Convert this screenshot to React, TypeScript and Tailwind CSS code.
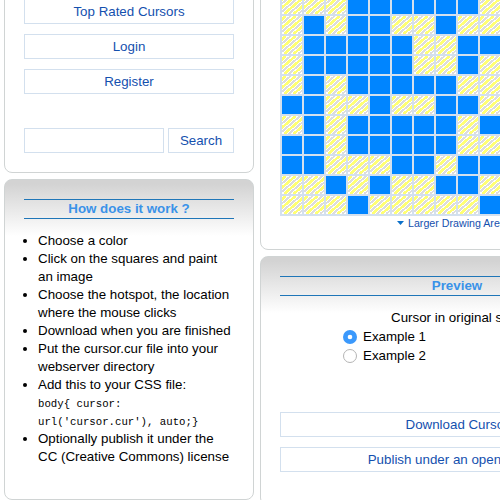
import React from "react";

const rows = [
  "YYYBBBBBBY",
  "YBYBBYYBYY",
  "YBBBBBYYBB",
  "YBBBBBYYBY",
  "YBYBBBBBYY",
  "BBYYBYYBBY",
  "YBYBBBBBYB",
  "BBYBBBBBYY",
  "BBYYYBBYBB",
  "YYBYBYYBBY",
  "YYYBYYYYYB",
];

function LinkBox({ children, className = "" }: { children: React.ReactNode; className?: string }) {
  return (
    <a className={`flex h-[25px] shrink-0 items-center justify-center border border-[#d3e0ee] bg-white pt-px whitespace-nowrap text-[#1450ae] ${className}`}>
      {children}
    </a>
  );
}

function Heading({ children }: { children: React.ReactNode }) {
  return (
    <h2 className="h-5 shrink-0 border-y border-[#1f76b8] text-center text-[13.33px] leading-[17px] font-bold text-[#3a92e8]">
      {children}
    </h2>
  );
}

function EmptyCell() {
  return (
    <svg className="h-[18px] w-5 bg-white" viewBox="0 0 20 18" shapeRendering="crispEdges">
      {[0, 1, 2, 3, 4].map((k) => (
        <React.Fragment key={k}>
          <path d={`M${4 + k * 9.5} 0L${4 + k * 9.5 - 21} 18`} stroke="#ffff75" strokeWidth="2.6" />
          <path d={`M${8.7 + k * 9.5} 0L${8.7 + k * 9.5 - 21} 18`} stroke="#dcdcdc" strokeWidth="2" />
        </React.Fragment>
      ))}
    </svg>
  );
}

const card = "flex flex-col rounded-[8px] border border-[#d0d4d4] px-[19px]";
const shaded = "bg-[linear-gradient(#d3d3d3_4px,#fff_56px)]";

export default function App() {
  return (
    <div className="flex h-[500px] w-[500px] overflow-hidden bg-white font-['Liberation_Sans',Arial,sans-serif] text-[13.33px] leading-[18px] text-black">
      <aside className="ml-1 flex w-[250px] shrink-0 flex-col gap-[6px]">
        <section className={`${card} -mt-10 h-[213px] shrink-0 justify-end pb-[19px]`}>
          <nav className="flex flex-col gap-[10px]">
            <LinkBox>Top Rated Cursors</LinkBox>
            <LinkBox>Login</LinkBox>
            <LinkBox>Register</LinkBox>
          </nav>
          <form className="mt-[34px] flex justify-between">
            <input className="h-[25px] w-[140px] border border-[#d3e0ee] outline-none" />
            <LinkBox className="w-[66px]">Search</LinkBox>
          </form>
        </section>

        <section className={`${card} ${shaded} h-[321px] shrink-0 pt-[19px]`}>
          <Heading>How does it work ?</Heading>
          <ul className="mt-[13px] list-disc pl-[14px] whitespace-nowrap">
            <li>Choose a color</li>
            <li>Click on the squares and paint<br />an image</li>
            <li>Choose the hotspot, the location<br />where the mouse clicks</li>
            <li>Download when you are finished</li>
            <li>Put the cursor.cur file into your<br />webserver directory</li>
            <li>
              Add this to your CSS file:
              <code className="block h-9 pt-px font-['Liberation_Mono',monospace] text-[10.7px]">
                body&#123; cursor:<br />url('cursor.cur'), auto;&#125;
              </code>
            </li>
            <li>Optionally publish it under the<br />CC (Creative Commons) license</li>
          </ul>
        </section>
      </aside>

      <main className="ml-[6px] flex w-[394px] shrink-0 flex-col gap-[6px]">
        <section className={`${card} -mt-10 h-[290px] shrink-0`}>
          <div className="mt-[33px] grid w-fit shrink-0 grid-cols-[repeat(10,20px)] gap-[2px] bg-[#d3e0ee] p-[2px]">
            {rows.flatMap((row, r) =>
              row.split("").map((c, i) =>
                c === "B" ? <div key={`${r}-${i}`} className="h-[18px] bg-[#0085ff]" /> : <EmptyCell key={`${r}-${i}`} />
              )
            )}
          </div>
          <a className="ml-[117px] flex h-[14px] items-center gap-[4px] text-[10.67px] whitespace-nowrap text-[#1450ae]">
            <svg className="h-1 w-[7px]" viewBox="0 0 7 4"><path d="M0 0h7L3.5 4z" fill="#0b70c9" /></svg>
            Larger Drawing Area
          </a>
        </section>

        <section className={`${card} ${shaded} h-[250px] shrink-0 pt-[19px]`}>
          <Heading>Preview</Heading>
          <p className="mt-[13px] text-center">Cursor in original size:</p>
          <div className="ml-[63px] flex flex-col">
            <label className="flex h-[19px] items-center gap-[6px]">
              <svg className="size-[14px]" viewBox="0 0 14 14"><circle cx="7" cy="7" r="7" fill="#3b99fc" /><circle cx="7" cy="7" r="2.3" fill="#fff" /></svg>
              Example 1
            </label>
            <label className="flex h-[19px] items-center gap-[6px]">
              <svg className="size-[14px]" viewBox="0 0 14 14"><circle cx="7" cy="7" r="6.5" fill="#fff" stroke="#b4b4b4" /></svg>
              Example 2
            </label>
          </div>
          <div className="mt-[47px] flex flex-col gap-[10px]">
            <LinkBox>Download Cursor</LinkBox>
            <LinkBox>Publish under an open license</LinkBox>
          </div>
        </section>
      </main>
    </div>
  );
}
